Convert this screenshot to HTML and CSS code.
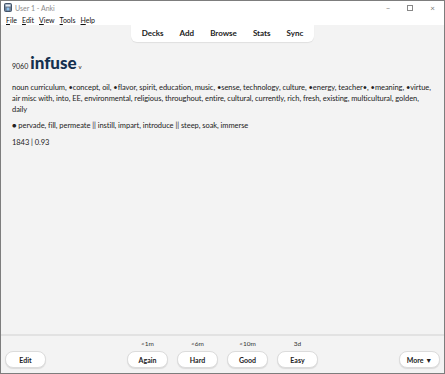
FILE: index.html
```html
<!DOCTYPE html>
<html lang="en">
<head>
    <meta charset="UTF-8">
    <title>User 1 - Anki</title>
    <link rel="stylesheet" href="styles.css">
</head>
<body>
    <div class="window">
        <div class="titlebar">
            <svg class="app-icon" width="8" height="9" viewBox="0 0 8 9">
                <rect x="0.5" y="0.5" width="7" height="8" rx="1" fill="#6d7f95" stroke="#44546a"/>
                <rect x="1.5" y="1.5" width="5" height="2" fill="#e8eef5"/>
                <circle cx="4" cy="6" r="1.5" fill="#8fc3f0"/>
            </svg>
            <span class="title">User 1 - Anki</span>
            <div class="controls">
                <span>&#8211;</span>
                <span class="max"></span>
                <span>&#215;</span>
            </div>
        </div>
        <div class="menubar">
            <span><u>F</u>ile</span>
            <span><u>E</u>dit</span>
            <span><u>V</u>iew</span>
            <span><u>T</u>ools</span>
            <span><u>H</u>elp</span>
        </div>
        <div class="toolbar">
            <div class="pill">
                <span>Decks</span>
                <span>Add</span>
                <span>Browse</span>
                <span>Stats</span>
                <span>Sync</span>
            </div>
        </div>
        <div class="content">
            <div class="heading">
                <span class="rank">9060</span>
                <span class="word">infuse</span>
                <span class="pos">v</span>
            </div>
            <p>noun curriculum, •concept, oil, •flavor, spirit, education, music, •sense, technology, culture, •energy, teacher•, •meaning, •virtue, air misc with, into, EE, environmental, religious, throughout, entire, cultural, currently, rich, fresh, existing, multicultural, golden,<br>daily</p>
            <p>● pervade, fill, permeate || instill, impart, introduce || steep, soak, immerse</p>
            <p>1843 | 0.93</p>
        </div>
        <div class="bottombar">
            <div class="slot">
                <span class="due"></span>
                <button>Edit</button>
            </div>
            <div class="answers">
                <div class="slot">
                    <span class="due">&lt;1m</span>
                    <button>Again</button>
                </div>
                <div class="slot">
                    <span class="due">&lt;6m</span>
                    <button>Hard</button>
                </div>
                <div class="slot">
                    <span class="due">&lt;10m</span>
                    <button>Good</button>
                </div>
                <div class="slot">
                    <span class="due">3d</span>
                    <button>Easy</button>
                </div>
            </div>
            <div class="slot">
                <span class="due"></span>
                <button>More &#9660;</button>
            </div>
        </div>
    </div>
</body>
</html>
```

FILE: styles.css
```css
html, body {
    margin: 0;
    height: 100%;
}

body {
    font-family: Lato, "Noto Sans", sans-serif;
    color: #1a1a1a;
}

.window {
    box-sizing: border-box;
    height: 374px;
    border: 1px solid #7d7d7d;
    display: flex;
    flex-direction: column;
    background: #f3f3f3;
}

.titlebar {
    height: 13px;
    background: #fff;
    display: flex;
    align-items: center;
    padding-left: 3px;
    font-size: 7px;
    color: #8c8c8c;
}

.app-icon {
    margin-right: 3px;
}

.controls {
    margin-left: auto;
    display: flex;
    align-items: center;
    gap: 17px;
    padding-right: 9px;
    color: #777;
    font-size: 8px;
}

.controls .max {
    width: 6px;
    height: 6px;
    border: 1px solid #888;
    box-sizing: border-box;
}

.menubar {
    height: 11px;
    background: #fff;
    display: flex;
    align-items: center;
    gap: 5px;
    padding-left: 5px;
    font-size: 7px;
    color: #111;
}

.toolbar {
    height: 17px;
    display: flex;
    justify-content: center;
}

.pill {
    display: flex;
    align-items: center;
    gap: 16px;
    padding: 0 11px 1px;
    background: #fff;
    border-radius: 0 0 6px 6px;
    box-shadow: 0 1px 1px rgba(0, 0, 0, 0.08);
    font-size: 8px;
    font-weight: bold;
    color: #222;
}

.content {
    flex: 1;
    padding: 4px 11px 0;
    font-size: 7.5px;
    letter-spacing: -0.05px;
    color: #222;
}

.heading {
    margin: 6px 0 9px;
    display: flex;
    align-items: baseline;
    gap: 2px;
    letter-spacing: 0;
}

.rank {
    font-size: 7px;
}

.word {
    font-size: 17px;
    font-weight: 900;
    color: #14304f;
}

.pos {
    font-size: 6px;
}

.content p {
    margin: 0 0 5px;
    line-height: 11px;
}

.content p + p {
    margin-bottom: 6px;
}

.bottombar {
    height: 32px;
    border-top: 2px solid #e2e2e2;
    display: flex;
    justify-content: space-between;
    align-items: flex-end;
    padding: 0 4px 5px;
}

.answers {
    display: flex;
    gap: 9px;
}

.slot {
    display: flex;
    flex-direction: column;
    align-items: center;
    gap: 3px;
}

.due {
    height: 8px;
    font-size: 6.5px;
    line-height: 8px;
    color: #333;
}

button {
    width: 41px;
    height: 17px;
    border: 1px solid #dcdcdc;
    border-radius: 8px;
    background: #fff;
    box-shadow: 0 1px 1px rgba(0, 0, 0, 0.1);
    font-family: inherit;
    font-size: 7px;
    font-weight: bold;
    color: #222;
    padding: 0;
}
```
